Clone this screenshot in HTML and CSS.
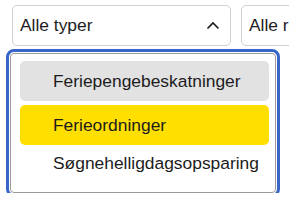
FILE: index.html
```html
<!DOCTYPE html>
<html lang="no">
<head>
    <meta charset="UTF-8">
    <meta name="viewport" content="width=device-width, initial-scale=1.0">
    <title>Filter</title>
    <link rel="stylesheet" href="styles.css">
</head>
<body>
    <div class="filters">
        <div class="select open">
            <span>Alle typer</span>
            <svg class="chevron" width="14" height="9" viewBox="0 0 14 9">
                <path d="M1.5 7.5 L7 2 L12.5 7.5" fill="none" stroke="#1a1a1a" stroke-width="1.6"/>
            </svg>
        </div>
        <div class="select second">
            <span>Alle regioner</span>
        </div>
    </div>
    <ul class="listbox">
        <li class="option hover">Feriepengebeskatninger</li>
        <li class="option selected">Ferieordninger</li>
        <li class="option">Søgnehelligdagsopsparing</li>
    </ul>
</body>
</html>
```

FILE: styles.css
```css
body {
    margin: 0;
    overflow: hidden;
    font-family: "Liberation Sans", Arial, sans-serif;
    font-size: 17.4px;
    color: #1c1c1c;
    background: #fff;
}
.filters {
    display: flex;
    gap: 10px;
    padding: 5px 0 0 12px;
}
.select {
    flex: none;
    box-sizing: border-box;
    width: 219px;
    height: 41px;
    border: 1px solid #cfcfcf;
    border-radius: 5px;
    display: flex;
    align-items: center;
    justify-content: space-between;
    padding: 0 10px 0 7px;
}
.select.second {
    width: 160px;
}
.listbox {
    list-style: none;
    box-sizing: border-box;
    width: 266px;
    height: 140px;
    margin: 7px 0 0 10px;
    padding: 7px 6px 5px 9px;
    border: 1px solid #9a9a9a;
    border-radius: 4px;
    outline: 3px solid #3865c8;
    outline-offset: 1px;
    display: flex;
    flex-direction: column;
    gap: 4px;
}
.option {
    flex: none;
    height: 40px;
    display: flex;
    align-items: center;
    padding-left: 33px;
    border-radius: 5px;
}
.option:last-child {
    height: 28px;
}
.option.hover {
    background: #e2e2e2;
}
.option.selected {
    background: #ffdf00;
}
```
